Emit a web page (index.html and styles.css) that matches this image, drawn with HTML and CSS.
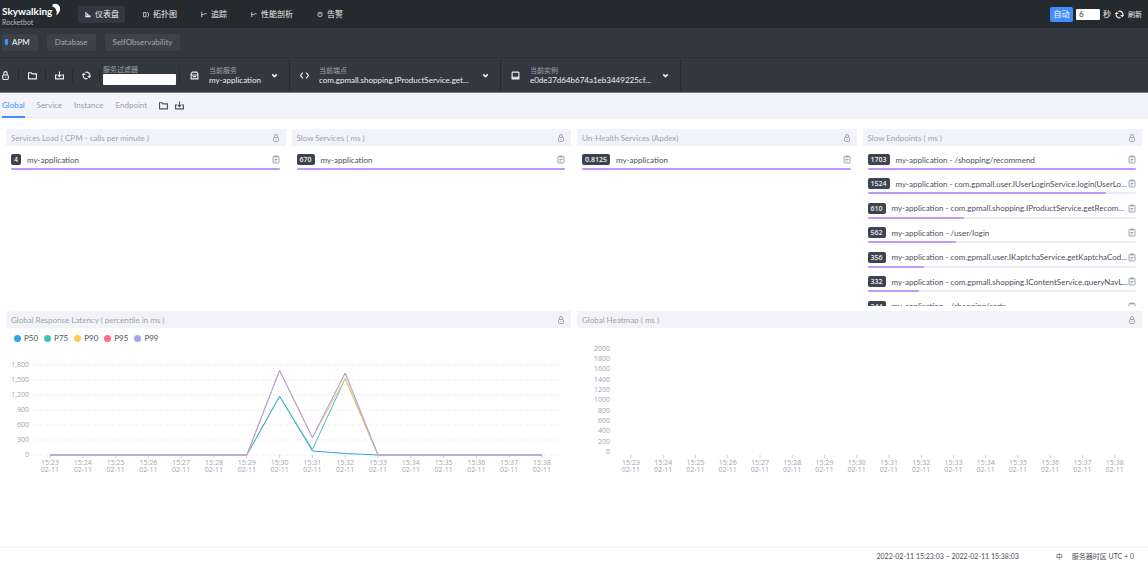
FILE: index.html
```html
<!DOCTYPE html>
<html lang="zh-CN">
<head>
<meta charset="UTF-8">
<title>SkyWalking</title>
<link rel="stylesheet" href="styles.css">
</head>
<body>
<svg class="sprite" aria-hidden="true">
  <symbol id="lock" viewBox="0 0 16 16"><rect x="3" y="7" width="10" height="8" rx="2"/><path d="M5 7V4a3 3 0 0 1 6 0v3M8 10v2"/></symbol>
  <symbol id="folder" viewBox="0 0 16 16"><path d="M1 14V3h5l1 2h8v9z"/></symbol>
  <symbol id="save" viewBox="0 0 16 16"><path d="M4 7H1v7h14V7h-3M8 1v9M5 7l3 3 3-3"/></symbol>
  <symbol id="sync" viewBox="0 0 16 16"><path d="M4 12.500A6 6 0 0 1 3 5M12 3.500A6 6 0 0 1 13 11M6 2.600a6 6 0 0 1 6 .9M10 13.400a6 6 0 0 1-6-.9"/><path class="solid" d="M0 7l3-4 4 4zM16 9l-3 4-4-4z"/></symbol>
  <symbol id="package" viewBox="0 0 16 16"><path d="M2 7V5l2-3h8l2 3v2M1 7h14M2 7v7h12V7M5 10h6"/></symbol>
  <symbol id="code" viewBox="0 0 16 16"><path d="M5 3L1 8l4 5M11 3l4 5-4 5"/></symbol>
  <symbol id="disk" viewBox="0 0 16 16"><rect x="2" y="2" width="12" height="9" rx="1"/><path d="M2 10v4h12v-4M3 13h10"/></symbol>
  <symbol id="arrow" viewBox="0 0 16 16"><path d="M4 6l4 4 4-4"/></symbol>
  <symbol id="clip" viewBox="0 0 16 16"><rect x="2" y="2" width="12" height="13" rx="1"/><path d="M5 1h6v2H5zM5 8h6M5 11h4"/></symbol>
  <symbol id="chart" viewBox="0 0 16 16"><path class="solid" d="M1 1h3v11h11v3H1zM5 5h3v3h3v1h3v2H5z"/></symbol>
  <symbol id="topo" viewBox="0 0 16 16"><path d="M1 3h7v11H1zM11 2l4 3v7l-4 3"/></symbol>
  <symbol id="trace" viewBox="0 0 16 16"><path d="M2 1v14M2 8h5l3-2h5"/></symbol>
  <symbol id="alarm" viewBox="0 0 16 16"><circle cx="8" cy="8" r="6"/><path d="M8 4v6"/></symbol>
</svg>

<header class="header">
  <a class="logo" href="#">
    <span class="logo-name">Skywalking<svg class="moon" viewBox="0 0 16 26" aria-hidden="true"><path d="M0 4C6-1 14 2 16 9c1 7-2 12-8 16 2-5 2-8 0-11-1-4-3-6-8-7 2-1 2-2 0-3z"/></svg></span>
    <span class="logo-sub">Rocketbot</span>
  </a>
  <nav class="nav">
    <a class="nav-item active" href="#"><svg class="icon-sm"><use href="#chart"/></svg>仪表盘</a>
    <a class="nav-item" href="#"><svg class="icon-sm"><use href="#topo"/></svg>拓扑图</a>
    <a class="nav-item" href="#"><svg class="icon-sm"><use href="#trace"/></svg>追踪</a>
    <a class="nav-item" href="#"><svg class="icon-sm"><use href="#trace"/></svg>性能剖析</a>
    <a class="nav-item" href="#"><svg class="icon-sm"><use href="#alarm"/></svg>告警</a>
  </nav>
  <div class="reload">
    <button class="auto" type="button">自动</button>
    <input class="seconds" id="seconds" type="text" value="6">
    <label for="seconds">秒</label>
    <button class="refresh" type="button"><svg class="icon"><use href="#sync"/></svg>刷新</button>
  </div>
</header>

<nav class="groups">
  <a class="group active" href="#">APM</a>
  <a class="group" href="#">Database</a>
  <a class="group" href="#">SelfObservability</a>
</nav>

<div class="toolbar">
  <button class="tool" type="button" aria-label="Lock"><svg class="icon"><use href="#lock"/></svg></button>
  <button class="tool" type="button" aria-label="Open"><svg class="icon"><use href="#folder"/></svg></button>
  <button class="tool" type="button" aria-label="Save"><svg class="icon"><use href="#save"/></svg></button>
  <button class="tool" type="button" aria-label="Reload"><svg class="icon"><use href="#sync"/></svg></button>
  <div class="filter">
    <label for="filter">服务过滤器</label>
    <input id="filter" type="text">
  </div>
  <div class="picker">
    <svg class="icon"><use href="#package"/></svg>
    <div class="picker-text">
      <label for="service">当前服务</label>
      <select id="service"><option>my-application</option></select>
    </div>
    <svg class="icon arrow"><use href="#arrow"/></svg>
  </div>
  <div class="picker wide">
    <svg class="icon"><use href="#code"/></svg>
    <div class="picker-text">
      <label for="endpoint">当前端点</label>
      <select id="endpoint"><option>com.gpmall.shopping.IProductService.get...</option></select>
    </div>
    <svg class="icon arrow"><use href="#arrow"/></svg>
  </div>
  <div class="picker mid">
    <svg class="icon"><use href="#disk"/></svg>
    <div class="picker-text">
      <label for="instance">当前实例</label>
      <select id="instance"><option>e0de37d64b674a1eb3449225cf...</option></select>
    </div>
    <svg class="icon arrow"><use href="#arrow"/></svg>
  </div>
</div>

<nav class="tabs">
  <a class="tab active" href="#">Global</a>
  <a class="tab" href="#">Service</a>
  <a class="tab" href="#">Instance</a>
  <a class="tab" href="#">Endpoint</a>
  <button class="tab-tool" type="button" aria-label="Open"><svg class="icon"><use href="#folder"/></svg></button>
  <button class="tab-tool" type="button" aria-label="Save"><svg class="icon"><use href="#save"/></svg></button>
</nav>

<main class="board">
  <section class="card">
    <h2 class="card-title">Services Load ( CPM - calls per minute )<svg class="icon-lock"><use href="#lock"/></svg></h2>
    <ul class="list">
      <li class="row"><span class="badge">4</span><span class="name">my-application</span><svg class="icon-clip"><use href="#clip"/></svg><span class="bar"><span class="fill" style="width:100%"></span></span></li>
    </ul>
  </section>
  <section class="card">
    <h2 class="card-title">Slow Services ( ms )<svg class="icon-lock"><use href="#lock"/></svg></h2>
    <ul class="list">
      <li class="row"><span class="badge">670</span><span class="name">my-application</span><svg class="icon-clip"><use href="#clip"/></svg><span class="bar"><span class="fill" style="width:100%"></span></span></li>
    </ul>
  </section>
  <section class="card">
    <h2 class="card-title">Un-Health Services (Apdex)<svg class="icon-lock"><use href="#lock"/></svg></h2>
    <ul class="list">
      <li class="row"><span class="badge">0.8125</span><span class="name">my-application</span><svg class="icon-clip"><use href="#clip"/></svg><span class="bar"><span class="fill" style="width:100%"></span></span></li>
    </ul>
  </section>
  <section class="card">
    <h2 class="card-title">Slow Endpoints ( ms )<svg class="icon-lock"><use href="#lock"/></svg></h2>
    <div class="scroll">
    <ul class="list long">
      <li class="row"><span class="badge">1703</span><span class="name">my-application - /shopping/recommend</span><svg class="icon-clip"><use href="#clip"/></svg><span class="bar"><span class="fill" style="width:100%"></span></span></li>
      <li class="row"><span class="badge">1524</span><span class="name">my-application - com.gpmall.user.IUserLoginService.login(UserLo...</span><svg class="icon-clip"><use href="#clip"/></svg><span class="bar"><span class="fill" style="width:89%"></span></span></li>
      <li class="row"><span class="badge">610</span><span class="name">my-application - com.gpmall.shopping.IProductService.getRecom...</span><svg class="icon-clip"><use href="#clip"/></svg><span class="bar"><span class="fill" style="width:36%"></span></span></li>
      <li class="row"><span class="badge">562</span><span class="name">my-application - /user/login</span><svg class="icon-clip"><use href="#clip"/></svg><span class="bar"><span class="fill" style="width:33%"></span></span></li>
      <li class="row"><span class="badge">356</span><span class="name">my-application - com.gpmall.user.IKaptchaService.getKaptchaCod...</span><svg class="icon-clip"><use href="#clip"/></svg><span class="bar"><span class="fill" style="width:21%"></span></span></li>
      <li class="row"><span class="badge">332</span><span class="name">my-application - com.gpmall.shopping.IContentService.queryNavL...</span><svg class="icon-clip"><use href="#clip"/></svg><span class="bar"><span class="fill" style="width:19%"></span></span></li>
      <li class="row"><span class="badge">244</span><span class="name">my-application - /shopping/carts</span><svg class="icon-clip"><use href="#clip"/></svg><span class="bar"><span class="fill" style="width:14%"></span></span></li>
    </ul>
    </div>
  </section>
  <section class="card half">
    <h2 class="card-title">Global Response Latency ( percentile in ms )<svg class="icon-lock"><use href="#lock"/></svg></h2>
    <ul class="legend">
      <li class="p50">P50</li>
      <li class="p75">P75</li>
      <li class="p90">P90</li>
      <li class="p95">P95</li>
      <li class="p99">P99</li>
    </ul>
    <svg class="plot" id="latency" viewBox="0 0 565 128"></svg>
  </section>
  <section class="card half">
    <h2 class="card-title">Global Heatmap ( ms )<svg class="icon-lock"><use href="#lock"/></svg></h2>
    <svg class="plot" id="heatmap" viewBox="0 0 565 148"></svg>
  </section>
</main>

<footer class="footer">
  <span>2022-02-11 15:23:03 ~ 2022-02-11 15:38:03</span>
  <span class="lang">中</span>
  <span>服务器时区 UTC + 0</span>
</footer>
<script src="script.js"></script>
</body>
</html>
```

FILE: styles.css
```css
* {
  box-sizing: border-box;
}

body {
  margin: 0;
  min-height: 100vh;
  display: flex;
  flex-direction: column;
  font-family: Lato, "Noto Sans CJK SC", sans-serif;
  font-size: 8px;
  line-height: 10px;
  color: #4b515b;
  background: #fff;
}

a {
  color: inherit;
  text-decoration: none;
}

ul {
  margin: 0;
  padding: 0;
  list-style: none;
}

button, input, select {
  font: inherit;
  color: inherit;
  margin: 0;
  padding: 0;
  border: 0;
  background: none;
}

svg {
  flex: none;
  fill: none;
  stroke: currentColor;
  stroke-width: 2;
}

.sprite {
  position: absolute;
  width: 0;
  height: 0;
}

.solid {
  fill: currentColor;
  stroke: none;
}

.icon {
  width: 9px;
  height: 9px;
}

.icon-sm {
  width: 6px;
  height: 7px;
}

/* top bar */
.header {
  display: flex;
  align-items: center;
  height: 28px;
  padding: 0 6px 0 2px;
  color: #eee;
  background: #252a2f;
}

.logo {
  display: flex;
  flex-direction: column;
  width: 76px;
}

.logo-name {
  display: flex;
  align-items: flex-start;
  font-size: 10px;
  font-weight: bold;
  line-height: 16px;
  color: #fff;
}

.moon {
  width: 8px;
  height: 13px;
  fill: #fff;
  stroke: none;
}

.logo-sub {
  font-size: 7px;
  line-height: 6px;
  color: #b5b8bc;
}

.nav {
  display: flex;
  gap: 11px;
  flex: 1;
}

.nav-item {
  display: flex;
  align-items: center;
  gap: 4px;
  height: 17px;
  padding: 0 6px 0 7px;
  border-radius: 2px;
}

.nav-item.active {
  background: #333743;
}

.reload {
  display: flex;
  align-items: center;
  gap: 3px;
}

.auto {
  width: 23px;
  height: 15px;
  border-radius: 2px;
  color: #fff;
  background: #448dfe;
}

.seconds {
  width: 24px;
  height: 11px;
  padding: 0 3px;
  border-radius: 1px;
  color: #333;
  background: #fff;
}

.refresh {
  display: flex;
  align-items: center;
  gap: 4px;
  padding-left: 1px;
  font-size: 7px;
}

/* dashboard groups */
.groups {
  display: flex;
  align-items: center;
  gap: 9px;
  height: 29px;
  padding: 0 2px;
  color: #a3a8b1;
  background: #333840;
}

.group {
  padding: 3px 8px 4px;
  border-radius: 2px;
  background: #3c414a;
}

.group.active {
  display: flex;
  align-items: center;
  gap: 4px;
  padding-left: 3px;
  color: #fff;
}

.group.active::before {
  content: "";
  width: 3px;
  height: 6px;
  border-radius: 1px;
  background: #448dfe;
}

/* selectors */
.toolbar {
  display: flex;
  align-items: center;
  height: 36px;
  border-top: 1px solid #2b3037;
  border-bottom: 1px solid #777c84;
  color: #eee;
  background: #333840;
}

.tool {
  display: flex;
  justify-content: center;
  width: 27px;
  height: 13px;
  align-items: center;
  border-right: 1px solid #252a2f;
}

.tool:first-child {
  width: 19px;
  padding-right: 7px;
}

.toolbar label {
  display: block;
  font-size: 7px;
  line-height: 9px;
  color: #9ea4ae;
}

.filter {
  padding: 0 3px;
  border-right: 1px solid #292e35;
}

.filter input {
  display: block;
  width: 73px;
  height: 11px;
  border-radius: 1px;
  background: #fff;
}

.picker {
  display: flex;
  align-items: center;
  gap: 10px;
  width: 110px;
  height: 32px;
  padding: 0 10px;
  border-right: 1px solid #252a2f;
}

.picker.wide {
  width: 211px;
}

.picker.mid {
  width: 180px;
}

.picker-text {
  flex: 1;
  min-width: 0;
  margin-right: -3px;
}

.picker select {
  display: block;
  width: 100%;
  height: 10px;
  appearance: none;
  line-height: 10px;
}

.arrow {
  stroke-width: 3;
}

/* tabs */
.tabs {
  display: flex;
  align-items: center;
  gap: 12px;
  height: 25px;
  padding: 0 2px;
  border-bottom: 1px solid #ebecf1;
  color: #9aa0a9;
  background: #f3f4f9;
}

.tab {
  padding: 7px 0 6px;
  border-bottom: 2px solid transparent;
}

.tab.active {
  color: #448dfe;
  border-color: #448dfe;
}

.tab-tool {
  display: flex;
  width: 9px;
  color: #4b515b;
}

.tab-tool + .tab-tool {
  margin-left: -5px;
}

/* board */
.board {
  flex: 1;
  display: grid;
  grid-template-columns: repeat(4, minmax(0, 1fr));
  align-content: start;
  gap: 5px 6px;
  padding: 11px 6px 12px;
}

.half {
  grid-column: span 2;
}

.card-title {
  display: flex;
  align-items: center;
  justify-content: space-between;
  height: 17px;
  margin: 0;
  padding: 0 6px 0 5px;
  font-size: 8px;
  font-weight: normal;
  color: #9da3af;
  background: #f2f3f8;
}

.icon-lock {
  width: 8px;
  height: 8px;
}

.scroll {
  height: 160px;
  overflow: hidden;
}

.list {
  padding: 1px 6px 0 5px;
}

.list.long {
  display: grid;
  grid-template-columns: minmax(0, 1fr);
  grid-template-rows: repeat(7, 1fr);
  height: 172px;
}

.row {
  display: flex;
  flex-wrap: wrap;
  align-items: center;
  align-content: end;
  row-gap: 3px;
  height: 24px;
}

.badge {
  margin-right: 6px;
  padding: 0 3px;
  border-radius: 2px;
  font: 600 7px/11px "Open Sans", sans-serif;
  color: #eee;
  background: #3d444f;
}

.name {
  flex: 1 0 0;
  min-width: 0;
  white-space: nowrap;
}

.icon-clip {
  width: 8px;
  height: 9px;
  color: #9da3af;
}

.bar {
  width: 100%;
  height: 2px;
  margin-bottom: 1px;
  border-radius: 1px;
  background: #ececf4;
}

.fill {
  display: block;
  height: 2px;
  border-radius: 1px;
  background: #bf99f8;
}

/* charts */
.legend {
  display: flex;
  gap: 6px;
  height: 20px;
  padding: 0 8px;
  align-items: center;
}

.legend li {
  display: flex;
  align-items: center;
  gap: 3px;
}

.legend li::before {
  content: "";
  width: 7px;
  height: 7px;
  border-radius: 50%;
  background: var(--c);
}

.p50 { --c: #30a4eb; }
.p75 { --c: #45bfc0; }
.p90 { --c: #ffcc55; }
.p95 { --c: #ff6a84; }
.p99 { --c: #a0a7e6; }

.plot {
  display: block;
  width: 100%;
  height: auto;
  stroke-width: 1;
}

.plot text {
  font-family: "Open Sans", sans-serif;
  font-size: 7px;
  fill: #9da5b2;
  stroke: none;
}

.x-label {
  text-anchor: middle;
}

.y-label {
  text-anchor: end;
}

.grid-line {
  stroke: #f1f1f3;
  stroke-dasharray: 4 2;
}

.tick {
  stroke: #ccc;
}

.series {
  stroke: var(--c);
}

.series.p95,
.series.p99 {
  stroke: #bda5d9;
}

/* status line */
.footer {
  display: flex;
  justify-content: flex-end;
  align-items: center;
  height: 17px;
  padding: 0 14px 0 0;
  border-top: 1px solid #eee;
  font-size: 7px;
}

.lang {
  margin: 0 9px 0 37px;
}
```

FILE: script.js
```js
var SVG = 'http://www.w3.org/2000/svg';

function add(parent, tag, attrs, text) {
  var el = document.createElementNS(SVG, tag);
  for (var key in attrs) el.setAttribute(key, attrs[key]);
  if (text !== undefined) el.textContent = text;
  parent.appendChild(el);
}

// minutes 15:23 to 15:38, time above date
function drawTimes(svg, left, step, y) {
  for (var i = 0; i < 16; i++) {
    var x = left + i * step;
    add(svg, 'path', { class: 'tick', d: 'M' + x + ' ' + y + 'v3' });
    add(svg, 'text', { class: 'x-label', x: x, y: y + 10 }, '15:' + (23 + i));
    add(svg, 'text', { class: 'x-label', x: x, y: y + 17 }, '02-11');
  }
}

function drawLatency() {
  var svg = document.getElementById('latency');
  var zero = 107, scale = 0.05;
  for (var v = 0; v <= 1800; v += 300) {
    var y = zero - v * scale;
    add(svg, 'path', { class: 'grid-line', d: 'M27 ' + y + 'H553' });
    add(svg, 'text', { class: 'y-label', x: 23, y: y + 2 }, v.toLocaleString('en-US'));
  }
  drawTimes(svg, 44, 32.8, zero);

  // values from 15:29 to 15:33, all other minutes are 0
  var series = {
    p50: [0, 1175, 80, 30, 0],
    p75: [0, 1175, 110, 1530, 0],
    p90: [0, 1690, 350, 1530, 0],
    p95: [0, 1690, 350, 1640, 0],
    p99: [0, 1690, 350, 1640, 0]
  };
  for (var name in series) {
    var points = ['44,' + zero];
    series[name].forEach(function (value, i) {
      points.push((44 + (i + 6) * 32.8) + ',' + (zero - value * scale));
    });
    points.push('536,' + zero);
    add(svg, 'polyline', { class: 'series ' + name, points: points.join(' ') });
  }
}

function drawHeatmap() {
  var svg = document.getElementById('heatmap');
  for (var i = 0; i <= 10; i++) {
    add(svg, 'text', { class: 'y-label', x: 33, y: 126 - i * 10.35 }, i * 200);
  }
  drawTimes(svg, 54, 32.25, 127);
}

drawLatency();
drawHeatmap();
```
